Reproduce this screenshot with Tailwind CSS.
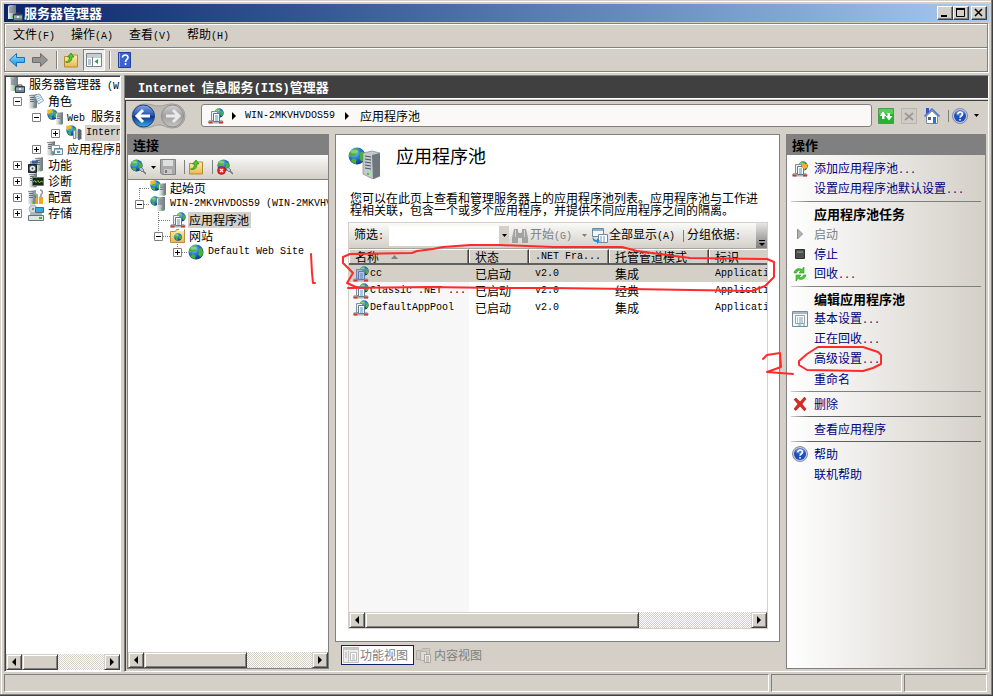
<!DOCTYPE html>
<html lang="zh-CN">
<head>
  <meta charset="UTF-8">
  <title>服务器管理器</title>
  <meta name="viewport" content="width=device-width, initial-scale=1.0">
  <script src="https://cdn.jsdelivr.net/npm/@tailwindcss/browser@4"></script>
</head>
<body class="relative flex flex-col min-h-screen bg-[#d4d0c8] text-black text-[12px] leading-4 font-['Noto_Sans_CJK_SC',sans-serif] whitespace-nowrap shadow-[inset_-1px_-1px_#404040,inset_-2px_-2px_#808080,inset_1px_1px_#d4d0c8,inset_2px_2px_#fff] pt-1 pl-1 pr-[4px] pb-1 overflow-hidden">

  <!-- ICON SPRITES -->
  <svg class="absolute size-0">
    <defs>
      <linearGradient id="gTower"><stop offset="0" stop-color="#eef1f2"/><stop offset=".5" stop-color="#b4bcc0"/><stop offset="1" stop-color="#6c757a"/></linearGradient>
      <radialGradient id="gGlobe" cx=".35" cy=".3" r=".8"><stop offset="0" stop-color="#9fd4ff"/><stop offset=".45" stop-color="#2878d8"/><stop offset="1" stop-color="#06287c"/></radialGradient>
      <linearGradient id="gFolder" x2="0" y2="1"><stop offset="0" stop-color="#fff0a8"/><stop offset="1" stop-color="#e8b850"/></linearGradient>
      <linearGradient id="gArrow" x2="0" y2="1"><stop offset="0" stop-color="#8fe0ff"/><stop offset="1" stop-color="#1a8fe0"/></linearGradient>
      <linearGradient id="gBack" x2="0" y2="1"><stop offset="0" stop-color="#7fa8e8"/><stop offset=".48" stop-color="#2450b0"/><stop offset=".52" stop-color="#0c2f88"/><stop offset="1" stop-color="#38b0f0"/></linearGradient>
      <linearGradient id="gFwd" x2="0" y2="1"><stop offset="0" stop-color="#d0d0d0"/><stop offset=".5" stop-color="#a0a0a0"/><stop offset="1" stop-color="#c4c4c4"/></linearGradient>
    </defs>
    <symbol id="tower" viewBox="0 0 8 14">
      <path d="M0 1 2 0h6v13l-2 1H0z" fill="url(#gTower)"/><path d="M6 1.5v12M0 1h6l2-1" stroke="#5f686c" stroke-width=".6" fill="none"/>
      <path d="M1 3h4M1 5h4M1 7h4" stroke="#59636a" stroke-width=".9"/><path d="M4 11h1.5v1.5H4z" fill="#3fd02a"/>
    </symbol>
    <symbol id="globe" viewBox="0 0 16 16">
      <circle cx="8" cy="8" r="7.5" fill="url(#gGlobe)"/>
      <path d="M3 3c2-2 5-2 6-1.500L7.500 4 8 6 5.500 8 3.500 7.500 1 9C.5 7 1.500 4.500 3 3zM10 5l3-1c2 2 2.500 5 1.500 7L12 13l-2-3 .8-2zM4.500 10l3 1.200L7 15c-2-.4-3.500-1.500-4.500-3z" fill="#46b52e"/>
      <ellipse cx="5.500" cy="4" rx="3" ry="1.800" fill="#fff" opacity=".35"/>
    </symbol>
    <symbol id="server" viewBox="0 0 16 16">
      <use href="#tower" x="1" y="0" width="8" height="14"/>
      <path d="M9 9.500V8h4v1.500" fill="none" stroke="#38434c"/><path d="M6.500 9.500h9v6h-9z" fill="#6f8291" stroke="#34424e"/><path d="M7 12h8" stroke="#c6d2da"/><path d="M10 11h2v2h-2z" fill="#e8e8e8"/>
    </symbol>
    <symbol id="roles" viewBox="0 0 16 16">
      <use href="#tower" x="1" y="1" width="8" height="15"/>
      <path d="m6.500 2.500 5-1.500 4 6.500-5 3.500z" fill="#f4f9ff" stroke="#5f86a8" stroke-width=".8"/><path d="m8 4 3.500-1M9 6l3.500-1.500M10 8l3.500-2" stroke="#5b9fd4" stroke-width=".8"/>
    </symbol>
    <symbol id="web" viewBox="0 0 16 16">
      <use href="#globe" x="0" y="0" width="11" height="11"/><path d="M0 1 6 0 4 4 1 5z" fill="#f3b81c"/>
      <use href="#tower" x="9" y="3" width="7" height="13"/>
    </symbol>
    <symbol id="iis" viewBox="0 0 16 16">
      <use href="#globe" x="0" y="0" width="11" height="11"/><path d="M0 1 6 0 4 4 1 5z" fill="#f3b81c"/>
      <path d="M7 5h3v9H7zM10 4l4 2v9l-4-2z" fill="#8d969b"/><path d="M12 3.500 15.500 5v9L12 15z" fill="#5e676c"/><path d="M11 4v10M8.500 6v7" stroke="#e3e8ea"/>
    </symbol>
    <symbol id="host" viewBox="0 0 16 16">
      <use href="#globe" x="0" y="0" width="10" height="10"/><use href="#tower" x="7" y="1" width="8" height="14"/>
    </symbol>
    <symbol id="appsrv" viewBox="0 0 16 16">
      <use href="#tower" x="0" y="0" width="8" height="15"/>
      <path d="M4.500 4.500h8v6h-8z" fill="#fff" stroke="#7f98aa"/><path d="M7.500 7.500h8v6h-8z" fill="#eaf4fc" stroke="#6b889c"/><path d="M8 8.500h7" stroke="#8fb8d8"/><path d="M10 10h3v2h-3z" fill="#4f94dc"/>
    </symbol>
    <symbol id="features" viewBox="0 0 16 16">
      <use href="#tower" x="7" y="0" width="8" height="15"/><path d="M2 4h7v3H2z" fill="#9fa8ae"/>
      <path d="M.5 7.500h8v8h-8z" fill="#3b4247" stroke="#1d2225"/><circle cx="4.500" cy="11.500" r="2.800" fill="#dce8f0"/><circle cx="4.500" cy="11.500" r=".9" fill="#3b4247"/><path d="M4 3.500h6v3H4z" fill="#35609c"/>
    </symbol>
    <symbol id="diag" viewBox="0 0 16 16">
      <use href="#tower" x="1" y="0" width="8" height="15"/><path d="M4.500 4.500h11v8h-11z" fill="#17251a" stroke="#6f7a7f"/><path d="m5 9 2-1.500 1 2 2-2 1.500 2.500L13 8l2 1" fill="none" stroke="#78c62c"/>
    </symbol>
    <symbol id="config" viewBox="0 0 16 16">
      <use href="#tower" x="0" y="1" width="8" height="15"/><path d="M7 1v4l2 1v9" fill="none" stroke="#98a1a7" stroke-width="2"/><path d="M12 1c3 0 3 4 1 4.500V8h-1.500" stroke="#8d979d" stroke-width="1.500" fill="none"/><path d="M11 8h4v7h-4zM7.500 9h2v6h-2z" fill="#f2a81d"/>
    </symbol>
    <symbol id="storage" viewBox="0 0 16 16">
      <circle cx="5" cy="4" r="4" fill="#cfd8de" stroke="#89959c" stroke-width=".6"/><circle cx="5" cy="4" r="1" fill="#6b767c"/><path d="M7.500 2.500h8v5h-8z" fill="#35a8dc" stroke="#54666f"/><path d="M2 8h12v2H2z" fill="#aab4b9"/><path d="M.5 10.500h15v5H.5z" fill="#dfe4e6" stroke="#68737a"/><path d="M11 12h3v2h-3z" fill="#41b92b"/>
    </symbol>
    <symbol id="folderup" viewBox="0 0 16 16">
      <path d="M1.500 4.500h6l1-1.500h6v12h-13z" fill="url(#gFolder)" stroke="#b58b34"/><path d="M2.500 10C5 10 6.500 8 6.500 5H4.500L8 1l3 4H9c0 4-2.500 6.500-6.500 5z" fill="#55c52c" stroke="#2a8212" stroke-width=".7"/>
    </symbol>
    <symbol id="pool" viewBox="0 0 16 16">
      <use href="#globe" x="6" y="0" width="10" height="10"/>
      <path d="M1 12h13l2 2-1 1.500H1L0 14z" fill="#a9b7c0"/><path d="M.5 14.500h4M11 14.500h4" stroke="#cf3a30" stroke-width="1.800"/>
      <path d="M3.500 3.500h6v9h-6z" fill="#eaf0f5" stroke="#7e8e9b"/><path d="M5.500 5.500h6v8h-6z" fill="#fff" stroke="#66798a"/><path d="M7 8h3M7 10h3M7 12h3" stroke="#4b8fd0"/>
    </symbol>
    <symbol id="sitefolder" viewBox="0 0 16 16">
      <path d="M.5 3.500h5l1-2h8v13H.5z" fill="url(#gFolder)" stroke="#b9903c"/><path d="M9 1h5v2H9z" fill="#fff"/><use href="#globe" x="4" y="5" width="8" height="8"/>
    </symbol>
    <symbol id="connect" viewBox="0 0 16 16">
      <use href="#globe" x="0" y="0" width="13" height="13"/><path d="m9 10 2-2 3 3-2 2z" fill="#b8c2c8" stroke="#5c676e" stroke-width=".7"/><path d="m13 12 3 3" stroke="#6d787e" stroke-width="1.500"/>
    </symbol>
    <symbol id="save" viewBox="0 0 16 16">
      <path d="M.5.500h15v15H2l-1.500-1.500z" fill="#a9a9a9" stroke="#858585"/><path d="M3 1h10v6H3z" fill="#dedede"/><path d="M4 10h8v5H4z" fill="#c9c9c9"/><path d="M5 11h2v3H5z" fill="#7a7a7a"/>
    </symbol>
    <symbol id="help" viewBox="0 0 16 16">
      <circle cx="8" cy="8" r="7.500" fill="#c4cad8" stroke="#6d7891" stroke-width=".8"/><circle cx="8" cy="8" r="6" fill="#1d4fc0"/><ellipse cx="8" cy="5" rx="4.500" ry="3" fill="#fff" opacity=".25"/>
      <path d="M5.800 6.200c0-3 4.600-2.800 4.600 0C10.400 8 8 8 8 9.800M8 11v1.500" fill="none" stroke="#fff" stroke-width="1.600"/>
    </symbol>
    <symbol id="settings" viewBox="0 0 16 16">
      <path d="M.5.500h15v15H.5z" fill="#f4f7f9" stroke="#7b8a94"/><path d="M1 2h14" stroke="#aab8c0" stroke-width="2"/><path d="M3.500 4.500h9v8h-9z" fill="#fff" stroke="#94a4ae"/><path d="M5 7h1M5 9h1M5 11h1" stroke="#3e96d6"/><path d="M7 7h4M7 9h4M7 11h4" stroke="#8b9aa4"/><path d="M6 14h3M11 14h2" stroke="#20b8ec"/>
    </symbol>
    <symbol id="boxminus" viewBox="0 0 9 9"><path d="M.5.500h8v8h-8z" fill="#fff" stroke="#808080"/><path d="M2 4.500h5" stroke="#000"/></symbol>
    <symbol id="boxplus" viewBox="0 0 9 9"><path d="M.5.500h8v8h-8z" fill="#fff" stroke="#808080"/><path d="M2 4.500h5M4.500 2v5" stroke="#000"/></symbol>
  </svg>

  <!-- TITLE BAR -->
  <header class="flex items-center h-[18px] mb-px bg-linear-to-r from-[#0a246a] to-[#a6caf0] pl-[3px] pr-0.5">
    <svg class="size-4"><use href="#server"/></svg>
    <h1 class="ml-px text-[13px] font-bold text-white">服务器管理器</h1>
    <div class="ml-auto flex">
      <button aria-label="最小化" class="w-4 h-3.5 bg-[#d4d0c8] border border-white border-r-[#404040] border-b-[#404040] shadow-[inset_-1px_-1px_#808080]"><svg class="w-3.5 h-3"><path d="M3 8h6v2H3z"/></svg></button>
      <button aria-label="最大化" class="w-4 h-3.5 bg-[#d4d0c8] border border-white border-r-[#404040] border-b-[#404040] shadow-[inset_-1px_-1px_#808080]"><svg class="w-3.5 h-3"><path d="M2.500 2.500h8v7h-8z" fill="none" stroke="#000"/><path d="M2 1h9v2H2z"/></svg></button>
      <button aria-label="关闭" class="ml-0.5 w-4 h-3.5 bg-[#d4d0c8] border border-white border-r-[#404040] border-b-[#404040] shadow-[inset_-1px_-1px_#808080]"><svg class="w-3.5 h-3"><path d="m3 2 7 7m0-7-7 7" stroke="#000" stroke-width="1.500"/></svg></button>
    </div>
  </header>

  <!-- MENU AND TOOLBAR -->
  <div class="mb-[3px] mr-px border border-[#808080] shadow-[inset_1px_1px_#fff,1px_1px_#fff]">
    <nav class="flex items-center h-6 pl-2 gap-4 border-b border-[#808080]">
      <button>文件<span class="font-mono text-[10px]">(F)</span></button>
      <button>操作<span class="font-mono text-[10px]">(A)</span></button>
      <button>查看<span class="font-mono text-[10px]">(V)</span></button>
      <button>帮助<span class="font-mono text-[10px]">(H)</span></button>
    </nav>
    <div class="flex items-center h-[23px] pl-1 border-t border-white">
      <button aria-label="后退"><svg class="block size-4"><path d="m.5 8 7-6.500v4h8v5h-8v4z" fill="url(#gArrow)" stroke="#1672b8"/></svg></button>
      <button aria-label="前进" class="ml-[7px]"><svg class="block size-4"><path d="m15.500 8-7-6.500v4h-8v5h8v4z" fill="#949494" stroke="#6c6c6c"/></svg></button>
      <div class="ml-2 w-px h-[18px] bg-[#808080] shadow-[1px_0_#fff]"></div>
      <button aria-label="向上" class="ml-1.5"><svg class="block size-4"><use href="#folderup"/></svg></button>
      <button aria-label="显示控制台树" class="ml-1 grid place-items-center w-[22px] h-[22px] border border-[#808080] border-r-white border-b-white bg-[#efedea]"><svg class="size-4"><path d="M.5 1.500h15v13H.5z" fill="#fff" stroke="#73828c"/><path d="M1 3h14M1 5h14" stroke="#8c9ba6"/><path d="M6.500 5v9" stroke="#73828c"/><path d="M2 8h3M2 10h3M2 12h3" stroke="#6d8ea8"/><path d="M12 7v5L8.500 9.500z" fill="#28a032"/></svg></button>
      <div class="ml-1 w-px h-[18px] bg-[#808080] shadow-[1px_0_#fff]"></div>
      <button aria-label="帮助" class="ml-2"><svg class="block w-[13px] h-4"><path d="M.5.500h12v15H.5z" fill="#3a63cf" stroke="#20409c"/><path d="M1.500 1v14" stroke="#89a8ef"/><path d="M4.500 5.500c0-3.500 5.500-3 5.500 0 0 2-2.500 2-2.500 4.500m0 1v2" fill="none" stroke="#fff" stroke-width="1.600"/></svg></button>
    </div>
  </div>

  <main class="flex flex-1 min-h-0 gap-[3px]">
    <!-- SERVER MANAGER TREE -->
    <aside class="flex flex-col shrink-0 w-[117px] border border-[#808080] border-r-white border-b-white">
      <div class="flex flex-col flex-1 border-t border-l border-[#404040] bg-white overflow-hidden">
        <ul class="flex-1">
          <li class="flex items-center h-4 pl-[3px]"><svg class="size-4 shrink-0 mr-1"><use href="#server"/></svg><span>服务器管理器<span class="font-mono text-[10px] ml-1.5">(WIN-2MKVHVDOS59)</span></span></li>
          <li class="flex items-center h-4 pl-[7px]"><svg class="size-[9px] shrink-0 mr-1.5"><use href="#boxminus"/></svg><svg class="size-4 shrink-0 mr-1"><use href="#roles"/></svg>角色</li>
          <li class="flex items-center h-4 pl-[26px]"><svg class="size-[9px] shrink-0 mr-1.5"><use href="#boxminus"/></svg><svg class="size-4 shrink-0 mr-1"><use href="#web"/></svg><span><span class="font-mono text-[10px] mr-1.5">Web</span>服务器</span></li>
          <li class="flex items-center h-4 pl-[45px]"><svg class="size-[9px] shrink-0 mr-1.5"><use href="#boxplus"/></svg><svg class="size-4 shrink-0 mr-[3px]"><use href="#iis"/></svg><span class="bg-[#d4d0c8] pl-px font-mono text-[10px]">Internet</span></li>
          <li class="flex items-center h-4 pl-[26px]"><svg class="size-[9px] shrink-0 mr-1.5"><use href="#boxplus"/></svg><svg class="size-4 shrink-0 mr-1"><use href="#appsrv"/></svg>应用程序服</li>
          <li class="flex items-center h-4 pl-[7px]"><svg class="size-[9px] shrink-0 mr-1.5"><use href="#boxplus"/></svg><svg class="size-4 shrink-0 mr-1"><use href="#features"/></svg>功能</li>
          <li class="flex items-center h-4 pl-[7px]"><svg class="size-[9px] shrink-0 mr-1.5"><use href="#boxplus"/></svg><svg class="size-4 shrink-0 mr-1"><use href="#diag"/></svg>诊断</li>
          <li class="flex items-center h-4 pl-[7px]"><svg class="size-[9px] shrink-0 mr-1.5"><use href="#boxplus"/></svg><svg class="size-4 shrink-0 mr-1"><use href="#config"/></svg>配置</li>
          <li class="flex items-center h-4 pl-[7px]"><svg class="size-[9px] shrink-0 mr-1.5"><use href="#boxplus"/></svg><svg class="size-4 shrink-0 mr-1"><use href="#storage"/></svg>存储</li>
        </ul>
        <div class="flex h-4 mb-px bg-[repeating-conic-gradient(#fff_0_25%,#d4d0c8_0_50%)] bg-[length:2px_2px]">
          <button aria-label="向左滚动" class="w-4 h-4 bg-[#d4d0c8] border border-[#d4d0c8] border-r-[#404040] border-b-[#404040] shadow-[inset_1px_1px_#fff,inset_-1px_-1px_#808080]"><svg class="size-3.5"><path d="M9 3v8L5 7z"/></svg></button>
          <div class="w-9 bg-[#d4d0c8] border border-[#d4d0c8] border-r-[#404040] border-b-[#404040] shadow-[inset_1px_1px_#fff,inset_-1px_-1px_#808080]"></div>
          <button aria-label="向右滚动" class="ml-auto w-4 h-4 bg-[#d4d0c8] border border-[#d4d0c8] border-r-[#404040] border-b-[#404040] shadow-[inset_1px_1px_#fff,inset_-1px_-1px_#808080]"><svg class="size-3.5"><path d="M5 3v8l4-4z"/></svg></button>
        </div>
      </div>
    </aside>

    <!-- IIS MANAGER -->
    <section class="flex flex-col flex-1 min-w-0 border border-[#808080] border-r-white border-b-white">
      <h2 class="h-[22px] pl-[13px] bg-[#404040] text-white font-bold text-[13px] leading-[22px]"><span class="font-mono text-[12px] mr-1.5">Internet</span>信息服务<span class="font-mono text-[12px]">(IIS)</span>管理器</h2>
      <div class="h-[3px] border-t border-t-white border-b border-b-[#404040]"></div>

      <div class="flex flex-col flex-1 border-l border-[#404040]">
        <div class="flex items-center h-[33px] pb-1 pl-[5px] pr-[9px]">
          <svg class="shrink-0 w-[56px] h-[26px]" viewBox="0 0 56 26">
            <path d="M13 1C22 1 22 3 28 3s6-2 14-2a12 12 0 0 1 0 24c-8 0-8-3-14-3s-6 3-15 3A12 12 0 0 1 13 1z" fill="#bcb9b2" stroke="#a19e98"/>
            <circle cx="12.500" cy="13" r="11" fill="url(#gBack)" stroke="#24407c"/><path d="M6 13h13M12 7l-6 6 6 6" fill="none" stroke="#fff" stroke-width="3"/>
            <circle cx="41.500" cy="13" r="11" fill="url(#gFwd)" stroke="#8c8c8c"/><path d="M35 13h13M42 7l6 6-6 6" fill="none" stroke="#e9e9e9" stroke-width="3"/>
          </svg>
          <div class="ml-3.5 flex items-center flex-1 min-w-0 h-[23px] pl-1.5 bg-[#faf9f7] border border-[#808080] rounded-[3px]">
            <svg class="size-4"><use href="#pool"/></svg>
            <svg class="ml-2 mr-2 w-[5px] h-2"><path d="M0 0v8l4-4z"/></svg>
            <span class="font-mono text-[10px]">WIN-2MKVHVDOS59</span>
            <svg class="ml-2.5 mr-2.5 w-[5px] h-2"><path d="M0 0v8l4-4z"/></svg>
            <span>应用程序池</span>
          </div>
          <button aria-label="刷新" class="ml-1.5"><svg class="block size-4"><path d="M.5.500h15v15H.5z" fill="#22b42c" stroke="#4c9a50"/><path d="M1 1h14v5H1z" fill="#7ae080" opacity=".6"/><path d="M1.500 8 5 3.500 8.500 8h-2v3H4V8zM14.500 8 11 12.500 7.500 8h2V5H12v3z" fill="#fff"/></svg></button>
          <button aria-label="停止" class="ml-[7px]"><svg class="block size-4"><path d="M.5.500h15v15H.5z" fill="#cfccc6" stroke="#b8b5af"/><path d="m4 5 8 7m0-7-8 7" stroke="#9c9a96" stroke-width="1.800"/></svg></button>
          <button aria-label="主页" class="ml-[7px]"><svg class="block size-4"><path d="M2.500 8v7.500h11V8L8 3z" fill="#f8fbff" stroke="#7d8ca0"/><path d="M.5 8.500 8 1l7.500 7.500" fill="none" stroke="#5178bf" stroke-width="1.600"/><path d="M2 0h3v4L2 6z" fill="#3452cc"/><path d="M9 9h3v6.500H9z" fill="#2b74c0"/><path d="M4 9h3v3H4z" fill="#59636e"/></svg></button>
          <div class="ml-2 w-px h-3 bg-[#808080]"></div>
          <button aria-label="帮助" class="ml-[3px] flex items-center gap-1.5"><svg class="size-4"><use href="#help"/></svg><svg class="w-[5px] h-[3px]"><path d="M0 0h5L2.500 3z"/></svg></button>
        </div>

        <div class="flex flex-1 gap-1.5 pl-px pr-0.5 pb-0.5">
          <!-- CONNECTIONS -->
          <div class="flex flex-col shrink-0 w-[202px] border-x border-b border-[#808080] bg-white overflow-hidden">
            <h3 class="h-[21px] pl-[5px] bg-[#808080] text-[13px] leading-[21px] font-bold">连接</h3>
            <div class="flex items-center h-[25px] pl-0.5 bg-linear-to-b from-[#fafaf8] to-[#d4d0c8] border-b border-[#808080]">
              <button aria-label="连接到" class="flex items-center gap-[5px]"><svg class="size-4"><use href="#connect"/></svg><svg class="w-[5px] h-[3px]"><path d="M0 0h5L2.500 3z"/></svg></button>
              <button aria-label="保存连接" class="ml-1"><svg class="block size-4"><use href="#save"/></svg></button>
              <div class="ml-2 w-px h-3.5 bg-[#808080]"></div>
              <button aria-label="向上" class="ml-[3px]"><svg class="block size-4"><use href="#folderup"/></svg></button>
              <div class="ml-2 w-px h-3.5 bg-[#808080]"></div>
              <button aria-label="删除连接" class="ml-1"><svg class="block size-4"><use href="#connect"/><circle cx="4.500" cy="11.500" r="4" fill="#d92a20" stroke="#901510" stroke-width=".6"/><path d="m3 10 3 3m0-3-3 3" stroke="#fff" stroke-width="1.300"/></svg></button>
            </div>
            <ul class="flex-1">
              <li class="flex items-center h-4 pl-[7px]"><svg class="w-[15px] h-4 shrink-0"><path d="M4.500 8v8M5 8.500h10" stroke="#808080" stroke-dasharray="1 1"/></svg><svg class="size-4 shrink-0 mr-1"><use href="#web"/></svg>起始页</li>
              <li class="flex items-center h-4 pl-[7px]"><svg class="w-[15px] h-4 shrink-0"><path d="M4.500 0v4M9 8.500h6" stroke="#808080" stroke-dasharray="1 1"/><use href="#boxminus" y="4" width="9" height="9"/></svg><svg class="size-4 shrink-0 mr-1"><use href="#host"/></svg><span class="font-mono text-[10px] whitespace-pre">WIN-2MKVHVDOS59 (WIN-2MKVHVDOS59\Administrator)</span></li>
              <li class="flex items-center h-4 pl-[26px]"><svg class="w-4 h-4 shrink-0"><path d="M4.500 0v16M5 8.500h11" stroke="#808080" stroke-dasharray="1 1"/></svg><svg class="size-4 shrink-0 mr-0.5"><use href="#pool"/></svg><span class="bg-[#d4d0c8] pl-px pr-0.5">应用程序池</span></li>
              <li class="flex items-center h-4 pl-[26px]"><svg class="w-4 h-4 shrink-0"><path d="M4.500 0v4M9 8.500h7" stroke="#808080" stroke-dasharray="1 1"/><use href="#boxminus" y="4" width="9" height="9"/></svg><svg class="size-4 shrink-0 mr-[3px]"><use href="#sitefolder"/></svg>网站</li>
              <li class="flex items-center h-4 pl-[45px]"><svg class="w-[15px] h-4 shrink-0"><path d="M4.500 0v4M9 8.500h6" stroke="#808080" stroke-dasharray="1 1"/><use href="#boxplus" y="4" width="9" height="9"/></svg><svg class="size-4 shrink-0 mr-1"><use href="#globe"/></svg><span class="font-mono text-[10px]">Default Web Site</span></li>
            </ul>
            <div class="flex h-4 bg-[repeating-conic-gradient(#fff_0_25%,#d4d0c8_0_50%)] bg-[length:2px_2px]">
              <button aria-label="向左滚动" class="w-4 h-4 bg-[#d4d0c8] border border-[#d4d0c8] border-r-[#404040] border-b-[#404040] shadow-[inset_1px_1px_#fff,inset_-1px_-1px_#808080]"><svg class="size-3.5"><path d="M9 3v8L5 7z"/></svg></button>
              <div class="w-[103px] bg-[#d4d0c8] border border-[#d4d0c8] border-r-[#404040] border-b-[#404040] shadow-[inset_1px_1px_#fff,inset_-1px_-1px_#808080]"></div>
              <button aria-label="向右滚动" class="ml-auto w-4 h-4 bg-[#d4d0c8] border border-[#d4d0c8] border-r-[#404040] border-b-[#404040] shadow-[inset_1px_1px_#fff,inset_-1px_-1px_#808080]"><svg class="size-3.5"><path d="M5 3v8l4-4z"/></svg></button>
            </div>
          </div>

          <!-- APPLICATION POOLS -->
          <div class="flex flex-col flex-1 min-w-0">
            <div class="flex flex-col flex-1 min-w-0 bg-white border border-[#808080] pt-3 pb-3 pl-3 pr-[11px]">
              <div class="flex items-start h-8">
                <svg class="size-8" viewBox="0 0 32 32"><use href="#globe" x="0" y="0" width="18" height="18"/><path d="m15 6 9-2 8 2v23l-7 3-10-5z" fill="#c3c9cc" stroke="#7c868b" stroke-width=".7"/><path d="m24 8 8-2v23l-7 3z" fill="#6d777c"/><path d="m17 9 6 1M17 12l6 1M17 15l6 1M17 18l6 1M17 21l6 1" stroke="#4b555a"/><path d="M19 26h2v2h-2z" fill="#3fd02a"/></svg>
                <h3 class="ml-4 text-[18px] leading-4">应用程序池</h3>
              </div>
              <p class="mt-[13px] mb-1.5 pl-0.5 leading-3">您可以在此页上查看和管理服务器上的应用程序池列表。应用程序池与工作进<br>程相关联，包含一个或多个应用程序，并提供不同应用程序之间的隔离。</p>

              <div class="flex flex-col flex-1 min-w-0 border border-[#d4d0c8]">
                <div class="flex items-center h-[26px] pl-[5px] bg-linear-to-b from-[#fafaf8] to-[#d4d0c8] border-b border-[#a8a59e]">
                  <label for="filter">筛选<span class="font-mono text-[10px]">:</span></label>
                  <input id="filter" type="text" class="ml-[5px] w-[110px] h-5 bg-white px-1">
                  <button aria-label="筛选历史" class="grid place-items-center w-2.5 h-5 bg-[#d4d0c8]"><svg class="w-[5px] h-[3px]"><path d="M0 0h5L2.500 3z"/></svg></button>
                  <button class="ml-[3px] flex items-center text-[#808080]"><svg class="w-4 h-4 mr-0.5"><path d="M2 1h4v3l1 1h2l1-1V1h4l2 9v5h-6v-5H6v5H0v-5z" fill="#a2a2a2"/><path d="M3.500 2v7M12.500 2v7" stroke="#d6d6d6"/></svg><span>开始<span class="font-mono text-[10px]">(G)</span></span><svg class="ml-2.5 w-[5px] h-[3px]"><path d="M0 0h5L2.500 3z" fill="#808080"/></svg></button>
                  <button class="ml-[5px] flex items-center"><svg class="size-4 mr-px"><path d="M.5.500h11v8H.5z" fill="#f2f8fd" stroke="#71899b"/><path d="M1 2h10" stroke="#8cb0cc" stroke-width="2"/><path d="M6.500 6.500h9v8h-9z" fill="#fff" stroke="#71899b"/><path d="M8 9h6M8 11h6M8 13h6" stroke="#5e9bd2" stroke-dasharray="2 1"/><path d="M1 8c0 3 2 4 4 4v-2l3 3-3 3v-2c-4 0-5-3-4-6z" fill="#2389d8"/></svg><span>全部显示<span class="font-mono text-[10px]">(A)</span></span></button>
                  <div class="ml-2 mr-[3px] w-px h-3 bg-[#808080]"></div>
                  <span>分组依据<span class="font-mono text-[10px]">:</span></span>
                  <button aria-label="更多" class="ml-auto w-[11px] h-full bg-linear-to-b from-[#e8e6e2] to-[#808080]"><svg class="w-[11px] h-[25px]"><path d="M3 17.500h6" stroke="#000"/><path d="M3 20h6l-3 3z"/></svg></button>
                </div>

                <div class="flex-1 min-w-0 overflow-hidden bg-[linear-gradient(90deg,#f7f7f7_120px,#fff_120px)]">
                  <table class="table-fixed border-separate border-spacing-0 w-[480px]">
                    <colgroup><col class="w-[120px]"><col class="w-[60px]"><col class="w-20"><col class="w-[100px]"><col class="w-[120px]"></colgroup>
                    <thead>
                      <tr class="bg-[#d4d0c8] text-left">
                        <th class="h-4 p-0 pl-1.5 font-normal leading-[13px] border-t border-t-white border-b-2 border-b-[#606060] border-r border-r-[#404040] shadow-[inset_1px_0_#fff,inset_-1px_0_#808080]"><span class="flex items-center gap-3">名称<svg class="w-[7px] h-1"><path d="M0 4h7L3.500 0z" fill="#808080"/></svg></span></th>
                        <th class="h-4 p-0 pl-1.5 font-normal leading-[13px] border-t border-t-white border-b-2 border-b-[#606060] border-r border-r-[#404040] shadow-[inset_1px_0_#fff,inset_-1px_0_#808080]">状态</th>
                        <th class="h-4 p-0 pl-1.5 font-normal leading-[13px] border-t border-t-white border-b-2 border-b-[#606060] border-r border-r-[#404040] shadow-[inset_1px_0_#fff,inset_-1px_0_#808080] font-mono text-[10px]">.NET Fra...</th>
                        <th class="h-4 p-0 pl-1.5 font-normal leading-[13px] border-t border-t-white border-b-2 border-b-[#606060] border-r border-r-[#404040] shadow-[inset_1px_0_#fff,inset_-1px_0_#808080]">托管管道模式</th>
                        <th class="h-4 p-0 pl-1.5 font-normal leading-[13px] border-t border-t-white border-b-2 border-b-[#606060] border-r border-r-[#404040] shadow-[inset_1px_0_#fff,inset_-1px_0_#808080]">标识</th>
                      </tr>
                    </thead>
                    <tbody>
                      <tr class="bg-[#d4d0c8]">
                        <td class="h-[17px] p-0 pl-1"><span class="flex items-center font-mono text-[10px]"><svg class="size-4 mr-px"><use href="#pool"/><path d="M3 3h9v11H3z" fill="#5a7ac0" opacity=".45"/></svg>cc</span></td>
                        <td class="p-0 pl-1.5">已启动</td><td class="p-0 pl-1.5 font-mono text-[10px]">v2.0</td><td class="p-0 pl-1.5">集成</td><td class="p-0 pl-1.5 font-mono text-[10px]">ApplicationPoolId</td>
                      </tr>
                      <tr>
                        <td class="h-[17px] p-0 pl-1"><span class="flex items-center font-mono text-[10px]"><svg class="size-4 mr-px"><use href="#pool"/></svg>Classic .NET ...</span></td>
                        <td class="p-0 pl-1.5">已启动</td><td class="p-0 pl-1.5 font-mono text-[10px]">v2.0</td><td class="p-0 pl-1.5">经典</td><td class="p-0 pl-1.5 font-mono text-[10px]">ApplicationPoolId</td>
                      </tr>
                      <tr>
                        <td class="h-[17px] p-0 pl-1"><span class="flex items-center font-mono text-[10px]"><svg class="size-4 mr-px"><use href="#pool"/></svg>DefaultAppPool</span></td>
                        <td class="p-0 pl-1.5">已启动</td><td class="p-0 pl-1.5 font-mono text-[10px]">v2.0</td><td class="p-0 pl-1.5">集成</td><td class="p-0 pl-1.5 font-mono text-[10px]">ApplicationPoolId</td>
                      </tr>
                    </tbody>
                  </table>
                </div>
                <div class="flex h-4 bg-[repeating-conic-gradient(#fff_0_25%,#d4d0c8_0_50%)] bg-[length:2px_2px]">
                  <button aria-label="向左滚动" class="w-4 h-4 bg-[#d4d0c8] border border-[#d4d0c8] border-r-[#404040] border-b-[#404040] shadow-[inset_1px_1px_#fff,inset_-1px_-1px_#808080]"><svg class="size-3.5"><path d="M9 3v8L5 7z"/></svg></button>
                  <div class="w-[274px] bg-[#d4d0c8] border border-[#d4d0c8] border-r-[#404040] border-b-[#404040] shadow-[inset_1px_1px_#fff,inset_-1px_-1px_#808080]"></div>
                  <button aria-label="向右滚动" class="ml-auto w-4 h-4 bg-[#d4d0c8] border border-[#d4d0c8] border-r-[#404040] border-b-[#404040] shadow-[inset_1px_1px_#fff,inset_-1px_-1px_#808080]"><svg class="size-3.5"><path d="M5 3v8l4-4z"/></svg></button>
                </div>
              </div>
            </div>

            <div class="flex h-5 mt-[3px] mb-1 pl-1.5 gap-0.5 text-[#808080]">
              <button class="flex items-center w-[73px] pl-px gap-px bg-white border border-[#0a246a]"><svg class="size-4"><path d="M.5.500h15v15H.5z" fill="#ececec" stroke="#c0c0c0"/><path d="M1 2h14" stroke="#c8c8c8" stroke-width="2"/><path d="M5.500 4v11" stroke="#c4c4c4"/><path d="M7.500 5.500h6v8h-6z" fill="#fff" stroke="#c0c0c0"/><path d="M9 8h3M9 10h3M9 12h3M2 6h2M2 8h2M2 10h2" stroke="#b0b0b0"/></svg>功能视图</button>
              <button class="flex items-center gap-0.5"><svg class="size-4"><path d="M.5 3.500h5l1-2h7v11H.5z" fill="#cbc8c1" stroke="#b3b0aa"/><path d="M4.500 4.500h6v9h-6z" fill="#dedbd5" stroke="#b3b0aa"/><path d="M8.500 7.500h6v8h-6z" fill="#eceae6" stroke="#aaa7a1"/><path d="M10 10h3M10 12h3M10 14h3" stroke="#9b9892"/></svg>内容视图</button>
            </div>
          </div>

          <!-- ACTIONS -->
          <div class="flex flex-col shrink-0 w-[200px] border-x border-b border-[#808080] bg-linear-to-r from-white to-[#d4d0c8] text-[#00007f]">
            <h3 class="h-[21px] pl-[5px] bg-[#808080] text-black text-[13px] leading-[21px] font-bold">操作</h3>
            <ul class="pt-1 px-1">
              <li class="flex items-center h-5 pl-px"><svg class="size-4 mr-1.5"><use href="#pool"/><path d="m12 1 1 2.500 2.500-1L14.500 5 16 6.500l-2.500.5-1 2.500-1-2.500L9 6.500 10.500 5 9.500 2.500l2 1z" fill="#f7b22c"/></svg><a href="#">添加应用程序池<span class="font-mono text-[10px]">...</span></a></li>
              <li class="flex items-center h-5 pl-[23px]"><a href="#">设置应用程序池默认设置<span class="font-mono text-[10px]">...</span></a></li>
              <li class="h-[5px] py-0.5"><div class="h-px bg-linear-to-r from-[#d0d0d0] via-[#808080] via-10% to-[#808080]"></div></li>
              <li class="flex items-center h-5 pl-[23px] text-[13px] font-bold text-black">应用程序池任务</li>
              <li class="flex items-center h-5 pl-px text-[#808080]"><svg class="size-4 mr-1.5"><path d="m5.500 3 5 5-5 5z" fill="#b4b4b4" stroke="#8e8e8e"/></svg>启动</li>
              <li class="flex items-center h-5 pl-px"><svg class="size-4 mr-1.5"><path d="M3.500 3.500h9v9h-9z" fill="#4e4e4e" stroke="#303030"/><path d="M5 5h6v2H5z" fill="#767676"/></svg><a href="#">停止</a></li>
              <li class="flex items-center h-5 pl-px"><svg class="size-4 mr-1.5"><path d="M2 7c.5-4 5-5.500 8-3.500L12 1v6H7l2-2C6.500 4 5 5 4.500 7zM14 9c-.5 4-5 5.500-8 3.500L4 15V9h5l-2 2c2.500 1 4 0 4.500-2z" fill="#4fc93c" stroke="#2a9422" stroke-width=".6"/></svg><a href="#">回收<span class="font-mono text-[10px]">...</span></a></li>
              <li class="h-[5px] py-0.5"><div class="h-px bg-linear-to-r from-[#d0d0d0] via-[#808080] via-10% to-[#808080]"></div></li>
              <li class="flex items-center h-5 pl-[23px] text-[13px] font-bold text-black">编辑应用程序池</li>
              <li class="flex items-center h-5 pl-px"><svg class="size-4 mr-1.5"><use href="#settings"/></svg><a href="#">基本设置<span class="font-mono text-[10px]">...</span></a></li>
              <li class="flex items-center h-5 pl-[23px]"><a href="#">正在回收<span class="font-mono text-[10px]">...</span></a></li>
              <li class="flex items-center h-5 pl-[23px]"><a href="#">高级设置<span class="font-mono text-[10px]">...</span></a></li>
              <li class="flex items-center h-5 pl-[23px]"><a href="#">重命名</a></li>
              <li class="h-[5px] py-0.5"><div class="h-px bg-linear-to-r from-[#d0d0d0] via-[#808080] via-10% to-[#808080]"></div></li>
              <li class="flex items-center h-5 pl-px"><svg class="size-4 mr-1.5"><path d="M2 3.500 4 2l4 4 4.500-5L14 3l-4 5 4 5-1.500 2L8 10l-4 4.500L2 13l4-5z" fill="#dc2a22" stroke="#a01812" stroke-width=".6"/></svg><a href="#">删除</a></li>
              <li class="h-[5px] py-0.5"><div class="h-px bg-linear-to-r from-[#d0d0d0] via-[#606060] via-10% to-[#606060]"></div></li>
              <li class="flex items-center h-5 pl-[23px]"><a href="#">查看应用程序</a></li>
              <li class="h-[5px] py-0.5"><div class="h-px bg-linear-to-r from-[#d0d0d0] via-[#606060] via-10% to-[#606060]"></div></li>
              <li class="flex items-center h-5 pl-px"><svg class="size-4 mr-1.5"><use href="#help"/></svg><a href="#">帮助</a></li>
              <li class="flex items-center h-5 pl-[23px]"><a href="#">联机帮助</a></li>
            </ul>
          </div>
        </div>
      </div>
    </section>
  </main>

  <!-- STATUS BAR -->
  <footer class="flex gap-0.5 h-[18px] mt-0.5 pr-0.5">
    <div class="flex-1 border border-[#808080] border-r-white border-b-white"></div>
    <div class="w-[131px] border border-[#808080] border-r-white border-b-white"></div>
    <div class="w-[83px] border border-[#808080] border-r-white border-b-white"></div>
  </footer>

  <!-- RED PEN NOTES -->
  <svg class="absolute top-0 left-0 w-[993px] h-[696px] pointer-events-none" fill="none" stroke="#ff2a2a" stroke-width="2" stroke-linejoin="round" stroke-linecap="round">
    <path d="M311 254l1 19 1 10h2"/>
    <path d="M358 288l-11-5 6-10-10-10v-6l7-3 62-1 5-2 16-2 10-2 27-2h30l53 2h69l15 4 30 4 23 3 77 1 7 3v15l-9 9-13 5-122-2-80-1h-50l-73-1-79 1"/>
    <path d="M763 359l4-4 13-2 1 14-14 5 26 2"/>
    <path d="M818 347h45l15 5 3 3v9l-8 4-10 3-56-1-8-5v-4l8-7z"/>
  </svg>
</body>
</html>
